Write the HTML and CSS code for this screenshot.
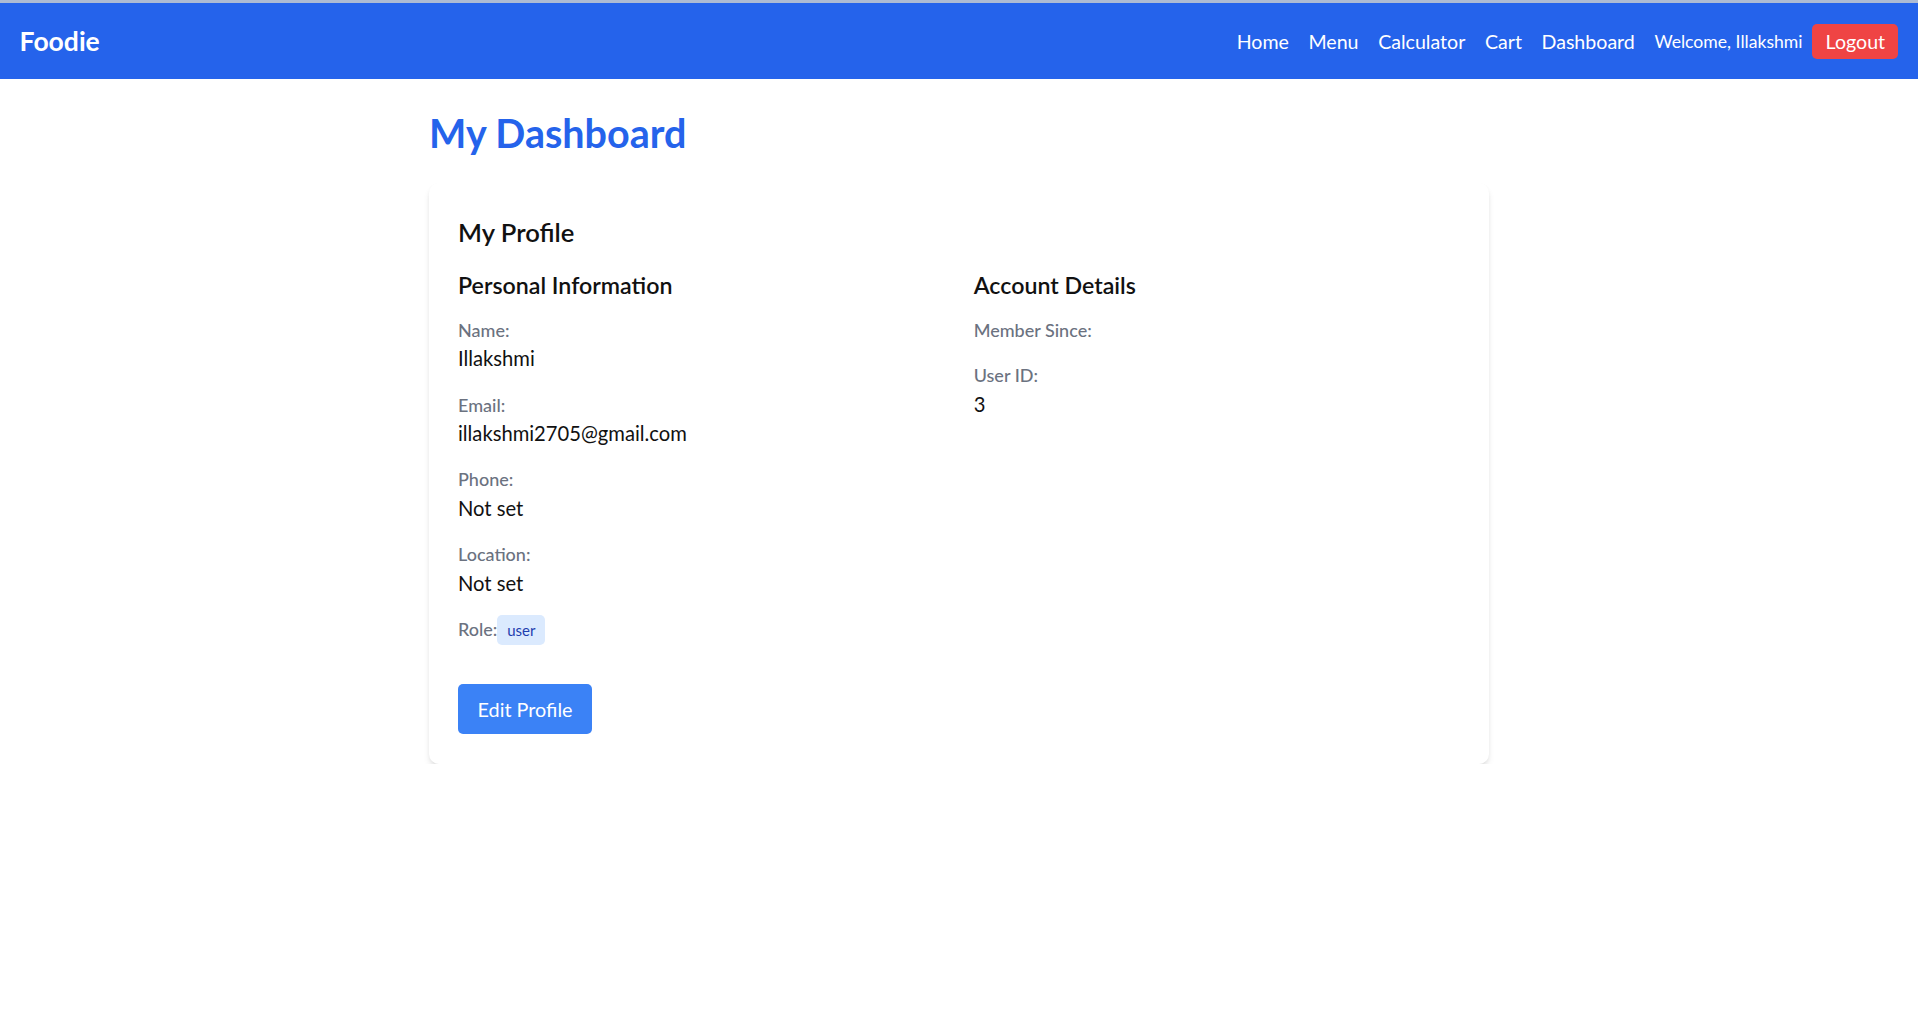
FILE: index.html
```html
<!DOCTYPE html>
<html lang="en">
<head>
<meta charset="utf-8">
<title>Foodie - Dashboard</title>
<link rel="stylesheet" href="styles.css">
</head>
<body>
<header class="topbar">
  <a class="brand" href="#">Foodie</a>
  <nav class="nav">
    <a class="nav-link" href="#">Home</a>
    <a class="nav-link" href="#">Menu</a>
    <a class="nav-link" href="#">Calculator</a>
    <a class="nav-link" href="#">Cart</a>
    <a class="nav-link" href="#">Dashboard</a>
    <div class="user-box">
      <span class="welcome">Welcome, Illakshmi</span>
      <button class="logout" type="button">Logout</button>
    </div>
  </nav>
</header>

<main class="page">
  <h1 class="page-title">My Dashboard</h1>
  <section class="card">
    <h2 class="card-title">My Profile</h2>
    <div class="grid">
      <div class="col">
        <h3 class="section-title">Personal Information</h3>
        <div class="fields">
          <div class="field"><p class="label">Name:</p><p class="value">Illakshmi</p></div>
          <div class="field"><p class="label">Email:</p><p class="value">illakshmi2705@gmail.com</p></div>
          <div class="field"><p class="label">Phone:</p><p class="value">Not set</p></div>
          <div class="field"><p class="label">Location:</p><p class="value">Not set</p></div>
          <div class="field role-field"><p class="label">Role:<span class="badge">user</span></p></div>
        </div>
      </div>
      <div class="col">
        <h3 class="section-title">Account Details</h3>
        <div class="fields">
          <div class="field"><p class="label">Member Since:</p><p class="value"></p></div>
          <div class="field"><p class="label">User ID:</p><p class="value">3</p></div>
        </div>
      </div>
    </div>
    <div class="actions">
      <button class="btn-primary" type="button">Edit Profile</button>
    </div>
  </section>
</main>
</body>
</html>
```

FILE: styles.css
```css
* { box-sizing: border-box; }

html, body {
  margin: 0;
  padding: 0;
  background: #ffffff;
}

body {
  font-family: "Lato", "Open Sans", sans-serif;
  color: #111111;
  border-top: 3px solid #aebbd3;
}

p, h1, h2, h3 { margin: 0; }

.topbar {
  height: 76px;
  background: #2563eb;
  display: flex;
  align-items: center;
  justify-content: space-between;
  padding: 0 19.6px;
}

.brand {
  color: #ffffff;
  text-decoration: none;
  font-weight: 700;
  font-size: 26.5px;
  line-height: 39px;
}

.nav {
  display: flex;
  align-items: center;
  gap: 19.6px;
}

.nav-link {
  color: #ffffff;
  text-decoration: none;
  font-size: 19.6px;
  line-height: 29px;
}

.user-box {
  display: flex;
  align-items: center;
  gap: 9.8px;
}

.welcome {
  color: #ffffff;
  font-size: 17.6px;
  line-height: 25px;
}

.logout {
  font-family: inherit;
  background: #ef4444;
  color: #ffffff;
  border: 0;
  border-radius: 5px;
  font-size: 19.6px;
  line-height: 25px;
  padding: 5px 13.3px;
}

.page {
  width: 1060px;
  margin: 0 auto;
  padding-top: 32px;
}

.page-title {
  color: #2563eb;
  font-weight: 700;
  font-size: 39.5px;
  line-height: 44px;
  margin-bottom: 28px;
}

.card {
  background: #ffffff;
  border-radius: 10px;
  box-shadow: 0 5px 7px -1px rgba(0, 0, 0, 0.1), 0 2px 5px -2px rgba(0, 0, 0, 0.1);
  padding: 32px 29px 30.5px;
}

.card-title {
  font-size: 25.6px;
  line-height: 34px;
  font-weight: 600;
  color: #111111;
  margin-bottom: 19px;
}

.grid {
  display: grid;
  grid-template-columns: 1fr 1fr;
  column-gap: 29.4px;
}

.section-title {
  font-size: 23.2px;
  line-height: 34px;
  font-weight: 600;
  color: #111111;
  margin-bottom: 15.6px;
}

.fields {
  display: flex;
  flex-direction: column;
  gap: 19px;
}

.role-field {
  margin-top: -2px;
}

.label {
  font-size: 18px;
  line-height: 24.5px;
  font-weight: 500;
  color: #6b7280;
}

.value {
  font-size: 20.2px;
  line-height: 29.4px;
  margin-top: 2px;
  color: #111111;
}

.value:empty {
  line-height: 0;
}

.badge {
  display: inline-block;
  background: #dbeafe;
  color: #1e40af;
  font-size: 15px;
  line-height: 20px;
  padding: 5px 9.8px;
  border-radius: 5px;
  font-weight: 400;
}

.actions {
  margin-top: 38.5px;
}

.btn-primary {
  font-family: inherit;
  background: #3b82f6;
  color: #ffffff;
  border: 0;
  border-radius: 5px;
  font-size: 19.8px;
  line-height: 30px;
  padding: 10px 19.6px;
}
```
